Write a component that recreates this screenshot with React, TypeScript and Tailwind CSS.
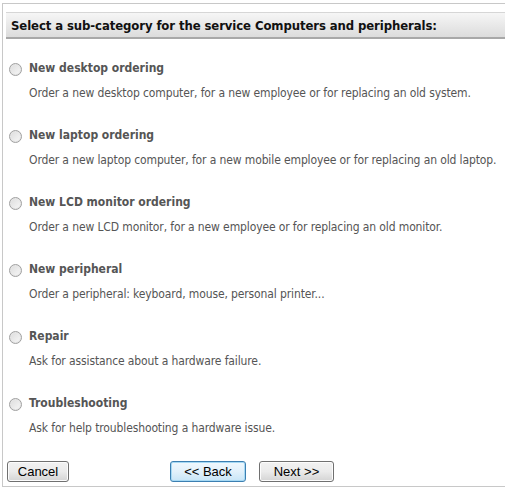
import React from "react";

// Sub-category picker for a service request wizard

const OPTIONS = [
  {
    title: "New desktop ordering",
    description: "Order a new desktop computer, for a new employee or for replacing an old system.",
  },
  {
    title: "New laptop ordering",
    description: "Order a new laptop computer, for a new mobile employee or for replacing an old laptop.",
  },
  {
    title: "New LCD monitor ordering",
    description: "Order a new LCD monitor, for a new employee or for replacing an old monitor.",
  },
  {
    title: "New peripheral",
    description: "Order a peripheral: keyboard, mouse, personal printer...",
  },
  {
    title: "Repair",
    description: "Ask for assistance about a hardware failure.",
  },
  {
    title: "Troubleshooting",
    description: "Ask for help troubleshooting a hardware issue.",
  },
];

const tahoma = "font-['DejaVu_Sans_Condensed','DejaVu_Sans',sans-serif]";

function Radio() {
  return (
    <span className="mt-[2px] inline-block h-[13px] w-[13px] shrink-0 rounded-full border border-[#a0a0a0] bg-gradient-to-br from-[#dcdcdc] to-[#f8f8f8] shadow-[inset_0_0_0_1px_#e6e6e6]" />
  );
}

function Button({ label, focused }: { label: string; focused?: boolean }) {
  return (
    <button
      className={
        "h-[21px] w-full rounded-[3px] border bg-gradient-to-b text-[13px] leading-none text-black font-['Liberation_Sans',Arial,sans-serif] " +
        (focused
          ? "border-[#3c7fb1] from-[#f0f8fd] via-[#e2f1fb] to-[#c8e5f7] shadow-[inset_0_0_0_1px_#a6d9f4]"
          : "border-[#707070] from-[#f2f2f2] via-[#ebebeb] to-[#d4d4d4] shadow-[inset_0_0_0_1px_#fcfcfc]")
      }
    >
      {label}
    </button>
  );
}

export default function App() {
  return (
    <div className="h-[489px] w-[505px] overflow-hidden bg-white pl-[2px] pt-[3px]">
      <div className={"w-[540px] border border-[#c8c8c8] pb-[3px] pl-[3px] pt-[8px] " + tahoma}>
        {/* En-tête */}
        <div className="flex h-[27px] items-center border-t border-b-2 border-t-[#d6d6d6] border-b-[#a8a8a8] bg-gradient-to-b from-[#f6f6f6] to-[#dcdcdc] pl-[5px] pt-[2px] text-[13px] font-bold tracking-[-0.1px] text-[#111]">
          Select a sub-category for the service Computers and peripherals:
        </div>

        {/* Options */}
        <div className="mt-[19px] flex flex-col gap-[22px] pl-[3px]">
          {OPTIONS.map((opt) => (
            <div key={opt.title} className="flex flex-col gap-[5px]">
              <label className="flex h-[20px] items-center gap-[7px] text-[12px] font-bold text-[#555]">
                <Radio />
                {opt.title}
              </label>
              <p className="flex h-[20px] items-center pl-[20px] text-[12px] tracking-[-0.12px] text-[#555]">
                {opt.description}
              </p>
            </div>
          ))}
        </div>

        {/* Navigation */}
        <div className="mt-[21px] flex items-center pl-[1px]">
          <div className="w-[62px]">
            <Button label="Cancel" />
          </div>
          <div className="ml-[101px] flex gap-[13px]">
            <div className="w-[76px]">
              <Button label="<< Back" focused />
            </div>
            <div className="w-[75px]">
              <Button label="Next >>" />
            </div>
          </div>
        </div>
      </div>
    </div>
  );
}
